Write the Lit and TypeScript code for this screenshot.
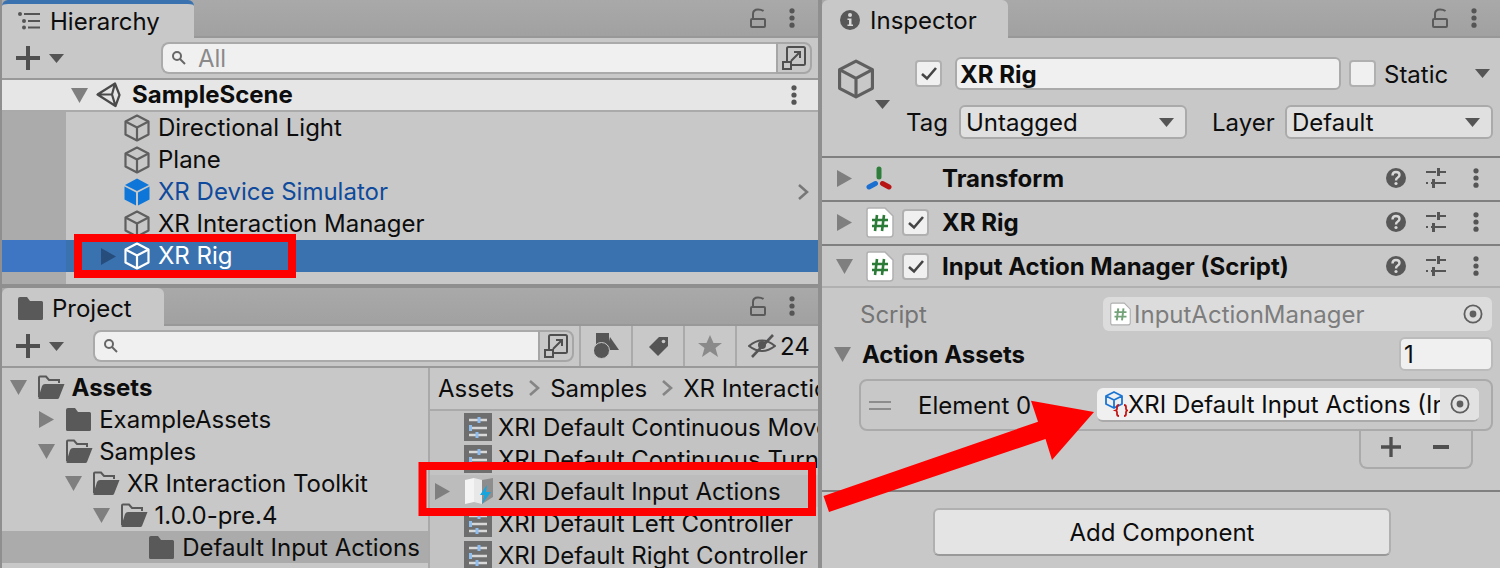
import { LitElement, html, css } from 'lit';
import { customElement } from 'lit/decorators.js';

const cube = (color = '#5f5f5f', size = 28) => html`
  <svg class="ico" width=${size} height=${size} viewBox="0 0 28 28" fill="none" stroke=${color} stroke-width="2.2" stroke-linejoin="round">
    <path d="M14 1.5 25.5 7.5V20.5L14 26.5 2.5 20.5V7.5Z" />
    <path d="M2.5 7.5 14 13.5 25.5 7.5M14 13.5V26.5" />
  </svg>`;

const blueCube = () => html`
  <svg class="ico" width="28" height="28" viewBox="0 0 28 28">
    <path d="M14 .5 26 7 14 13 2 7Z" fill="#0e76d8" />
    <path d="M1.5 8.5 13 14.5V27.5L1.5 21.5Z" fill="#0e76d8" />
    <path d="M26.5 8.5 15 14.5V27.5L26.5 21.5Z" fill="#0e76d8" />
  </svg>`;

const unity = () => html`
  <svg class="ico" width="26" height="26" viewBox="0 0 26 26" fill="none" stroke="#4a4a4a" stroke-width="2.2" stroke-linejoin="round">
    <path d="M1.5 12.5 19 1.5 23.5 13 19.5 24 1.5 12.5H16L19 1.5M16 12.5 19.5 24" />
  </svg>`;

const tri = (dir: 'down' | 'right', color = '#7f7f7f') => html`
  <svg class="ico" width="17" height="17" viewBox="0 0 17 17">
    <path d=${dir === 'down' ? 'M0 1H17L8.5 16Z' : 'M1 0V17L16 8.5Z'} fill=${color} />
  </svg>`;

const caret = () => html`
  <svg class="ico" width="15" height="9" viewBox="0 0 15 9"><path d="M0 0H15L7.5 9Z" fill="#555" /></svg>`;

const plus = (size = 24) => html`
  <svg class="ico" width=${size} height=${size} viewBox="0 0 24 24"><path d="M10 0H14V10H24V14H14V24H10V14H0V10H10Z" fill="#4f4f4f" /></svg>`;

const dots = () => html`
  <svg class="ico" width="6" height="20" viewBox="0 0 6 20" fill="#555">
    <circle cx="3" cy="2.8" r="2.6" /><circle cx="3" cy="10" r="2.6" /><circle cx="3" cy="17.2" r="2.6" />
  </svg>`;

const lock = () => html`
  <svg class="ico" width="16" height="20" viewBox="0 0 16 20" fill="none" stroke="#5a5a5a" stroke-width="2">
    <rect x="1" y="11" width="14" height="8" rx="1" />
    <path d="M3 11V6Q3 1.5 8 1.5 11.5 1.5 13.5 3" />
  </svg>`;

const expand = () => html`
  <svg class="ico" width="24" height="24" viewBox="0 0 24 24" fill="none" stroke="#4f4f4f" stroke-width="2">
    <path d="M5 15V2.5Q5 1 6.500 1H21.500Q23 1 23 2.500V18Q23 19 21.500 19H9" />
    <rect x="1" y="16" width="8" height="7" fill="#c8c8c8" />
    <path d="M9 15 18 6M12 6H18V12" />
  </svg>`;

const search = (arrow: boolean) => html`
  <svg class="ico" width="20" height="16" viewBox="0 0 20 16" fill="none" stroke="#666" stroke-width="2">
    <circle cx="6" cy="6" r="4" /><path d="M9 9 14 14" />
    ${arrow ? html`<path d="M14 4H20L17 8Z" fill="#666" stroke="none" />` : null}
  </svg>`;

const folder = () => html`
  <svg class="ico" width="25" height="25" viewBox="0 0 25 25">
    <path d="M2 1H9L12 5H23.500Q25 5 25 6.500V22.500Q25 24 23.500 24H1.500Q0 24 0 22.500V3Q0 1 2 1Z" fill="#595959" />
  </svg>`;

const folderOpen = () => html`
  <svg class="ico" width="27" height="25" viewBox="0 0 27 25">
    <path d="M1 22V2.500Q1 1.500 2 1.500H8L11 5H21V8" fill="none" stroke="#595959" stroke-width="2" />
    <path d="M7 9H26.500L21 23Q20.500 24 19.500 24H1.500Q0 24 .5 22.500L4 11Q5 9 7 9Z" fill="#595959" />
  </svg>`;

const assetIcon = () => html`
  <svg class="ico" width="28" height="28" viewBox="0 0 28 28">
    <rect width="28" height="28" fill="#6e6e6e" />
    <path d="M5 7H23M5 15H23M5 22H23" stroke="#d8d8d8" stroke-width="2.400" />
    <path d="M15 4V10" stroke="#8ebdf0" stroke-width="3" />
    <path d="M6.500 12V18" stroke="#8ebdf0" stroke-width="3" />
    <path d="M13 19V25" stroke="#8ebdf0" stroke-width="3" />
  </svg>`;

const actionsIcon = () => html`
  <svg class="ico" width="30" height="28" viewBox="0 0 30 28">
    <path d="M1 3 10 1V25L1 27Z" fill="#f4f4f4" />
    <path d="M10 1 18 3V27L10 25Z" fill="#e8e8e8" />
    <path d="M18 3 29 1V20L18 27Z" fill="#8d8d8d" />
    <path d="M23 8 16 18H20.500L18 27 27 15H22Z" fill="#16a5dc" />
  </svg>`;

const scriptIcon = (hash = '#2c7a37', w = 28, h = 31) => html`
  <svg class="ico" width=${w} height=${h} viewBox="0 0 28 31">
    <path d="M3 1H19L27 9V27Q27 30 24 30H3Q1 30 1 27V3Q1 1 3 1Z" fill="#fff" stroke="#b0b0b0" stroke-width="1.500" />
    <path d="M11 8 9 24M18 8 16 24M6 13H22M6 19H22" stroke=${hash} stroke-width="2.600" fill="none" />
  </svg>`;

const transformIcon = () => html`
  <svg class="ico" width="26" height="24" viewBox="0 0 26 24" fill="none" stroke-width="5" stroke-linecap="round">
    <path d="M13 3V11" stroke="#2f7d3a" />
    <path d="M3 21 9.500 17.500" stroke="#1b6fd0" />
    <path d="M23 21 16.500 17.500" stroke="#b81414" />
  </svg>`;

const help = () => html`
  <svg class="ico" width="20" height="20" viewBox="0 0 20 20">
    <circle cx="10" cy="10" r="10" fill="#585858" />
    <path d="M6.500 7.500Q6.500 4 10 4 13.500 4 13.500 7 13.500 8.500 11.500 9.700 10 10.500 10 12.500" fill="none" stroke="#d8d8d8" stroke-width="2.400" />
    <circle cx="10" cy="15.500" r="1.600" fill="#d8d8d8" />
  </svg>`;

const presets = () => html`
  <svg class="ico" width="20" height="20" viewBox="0 0 20 20" fill="#555">
    <path d="M0 3H10V5H0ZM14 3H20V5H14ZM11 0H14V8H11ZM0 14H2V16H0ZM5 14H20V16H5ZM6 11H9V20H6Z" />
  </svg>`;

const check = () => html`
  <span class="checkbox">
    <svg width="18" height="15" viewBox="0 0 18 15" fill="none" stroke="#444" stroke-width="2.600"><path d="M2 8 7 12.500 16 2" /></svg>
  </span>`;

const target = () => html`
  <svg class="ico" width="20" height="20" viewBox="0 0 20 20">
    <circle cx="10" cy="10" r="8.600" fill="none" stroke="#5f5f5f" stroke-width="1.800" />
    <circle cx="10" cy="10" r="3.400" fill="#5f5f5f" />
  </svg>`;

const crumbChev = () => html`
  <svg class="ico crumb-chev" width="12" height="16" viewBox="0 0 12 16" fill="none" stroke="#858585" stroke-width="2.600"><path d="M2 1 10 8 2 15" /></svg>`;

const tabMenu = () => html`<div class="tab-tools">${lock()}${dots()}</div>`;

interface TreeRow { depth: number; label: string; open?: boolean; closed?: boolean; bold?: boolean; active?: boolean; }

const TREE: TreeRow[] = [
  { depth: 0, label: 'Assets', open: true, bold: true },
  { depth: 1, label: 'ExampleAssets', closed: true },
  { depth: 1, label: 'Samples', open: true },
  { depth: 2, label: 'XR Interaction Toolkit', open: true },
  { depth: 3, label: '1.0.0-pre.4', open: true },
  { depth: 4, label: 'Default Input Actions', active: true },
];

const FILES = [
  'XRI Default Continuous Move',
  'XRI Default Continuous Turn',
  'XRI Default Input Actions',
  'XRI Default Left Controller',
  'XRI Default Right Controller',
];

@customElement('app-root')
export class AppRoot extends LitElement {
  static styles = css`
    :host {
      display: block;
      position: relative;
      width: 1500px;
      height: 568px;
      overflow: hidden;
      background: #c8c8c8;
      font-family: 'Inter', 'Liberation Sans', sans-serif;
      font-size: 24px;
      color: #0d0d0d;
    }
    * { box-sizing: border-box; }
    .ico { display: block; flex: none; }
    .page { display: flex; height: 568px; }
    .left { width: 822px; flex: none; display: flex; flex-direction: column; background: #8f8f8f; padding: 0 4px 0 2px; }
    .panel { background: #c8c8c8; display: flex; flex-direction: column; overflow: hidden; }
    .hierarchy { height: 284px; flex: none; margin-bottom: 4px; }
    .project { flex: 1; min-height: 0; }
    .right { flex: 1; display: flex; flex-direction: column; border-left: 0; }

    .strip { height: 38px; flex: none; display: flex; background: linear-gradient(#a9a9a9, #a1a1a1); border-bottom: 2px solid #989898; }
    .tab { height: 38px; display: flex; align-items: center; background: #c8c8c8; border-radius: 6px 6px 0 0; gap: 9px; padding: 2px 0 0 16px; flex: none; }
    .tab.focus { border-top: 4px solid #3a72b0; padding-top: 0; width: 192px; gap: 10px; }
    .tab-tools { margin-left: auto; display: flex; align-items: center; height: 36px; }
    .tab-tools svg:first-child { margin-right: 23px; }
    .tab-tools svg:last-child { margin-right: 23px; }

    .toolbar { height: 42px; flex: none; display: flex; align-items: center; border-bottom: 2px solid #999; padding-left: 14px; }
    .toolbar .add { display: flex; align-items: center; gap: 9px; width: 77px; flex: none; }
    .search { flex: 1; height: 32px; background: #f0f0f0; border: 2px solid #aaa; border-right: 0; border-radius: 8px 0 0 8px; display: flex; align-items: center; padding-left: 8px; gap: 7px; color: #8a8a8a; min-width: 0; }
    .expand { width: 36px; height: 32px; flex: none; border: 2px solid #a6a6a6; border-radius: 0 8px 8px 0; display: flex; align-items: center; justify-content: center; }
    .hierarchy .expand { margin-right: 6px; }

    .scene { height: 32px; flex: none; background: #e6e6e6; border-bottom: 2px solid #aaa; display: flex; align-items: center; font-weight: 700; padding-left: 69px; }
    .scene .tri-box { width: 25px; }
    .scene .name { margin-left: 10px; padding-bottom: 1px; }
    .scene .more { margin-left: auto; margin-right: 21px; }

    .hrow { height: 32px; flex: none; display: flex; align-items: center; white-space: nowrap; }
    .gutter { width: 64px; height: 100%; flex: none; background: #ababab; margin-right: 30px; }
    .hrow .tri-slot { width: 27px; flex: none; padding-left: 4px; }
    .hrow .label { margin-left: 7px; padding-bottom: 1px; }
    .hrow.prefab { color: #0f4a9c; }
    .hrow.selected { background: #3a72b0; color: #fff; }
    .hrow.selected .gutter { background: #3e76c3; }
    .hrow .chev { margin-left: auto; margin-right: 9px; }
    .hfill { flex: 1; display: flex; }
    .hfill .gutter { height: auto; }

    .proj-tools { display: flex; height: 40px; flex: none; margin-left: 5px; }
    .proj-tool { width: 52px; border-left: 2px solid #aaa; display: flex; align-items: center; justify-content: center; }
    .proj-tool.count { width: 83px; gap: 4px; justify-content: flex-start; padding-left: 11px; }

    .columns { flex: 1; display: flex; min-height: 0; }
    .tree { width: 426px; flex: none; border-right: 0; padding-top: 3px; overflow: hidden; }
    .tree-row { height: 32px; display: flex; align-items: center; white-space: nowrap; }
    .tree-row.active { background: #ababab; }
    .tree-row.strong { font-weight: 700; }
    .tri-col { width: 28px; flex: none; }
    .icon-col { width: 33.500px; flex: none; }
    .files { flex: 1; min-width: 0; border-left: 2px solid #a9a9a9; display: flex; flex-direction: column; overflow: hidden; background: #c3c3c3; }
    .crumbs { height: 43px; flex: none; display: flex; align-items: center; background: #c8c8c8; border-bottom: 2px solid #aaa; padding: 0 0 1px 8px; gap: 13px; white-space: nowrap; }
    .crumb-chev { margin: 0 -3px 0 1px; }
    .file { height: 32px; flex: none; display: flex; align-items: center; padding-left: 34px; white-space: nowrap; }
    .file .tri { width: 0; flex: none; position: relative; left: -30px; }
    .file.picked { background: #bcbcbc; }

    .head { height: 120px; flex: none; display: flex; border-bottom: 2px solid #808080; padding-top: 19px; }
    .cube-col { width: 85px; flex: none; padding: 2px 0 0 14px; position: relative; }
    .cube-col .caret { position: absolute; left: 53px; top: 43px; }
    .head-main { flex: 1; min-width: 0; padding-right: 7px; display: flex; flex-direction: column; gap: 15px; }
    .head-row { display: flex; align-items: center; }
    .name-row { margin-left: 8px; height: 33px; }
    .checkbox { width: 27px; height: 27px; flex: none; background: #f0f0f0; border: 2px solid #b0b0b0; border-radius: 4px; display: flex; align-items: center; justify-content: center; }
    .name-field { width: 386px; height: 33px; margin: 0 8px 0 13px; background: #f0f0f0; border: 2px solid #aaa; border-radius: 6px; font-weight: 700; display: flex; align-items: center; padding: 1px 0 0 3px; }
    .static { margin-left: 8px; padding-top: 1px; }
    .head-row .end { margin-left: auto; margin-right: 3px; }
    .tag-label { width: 53px; flex: none; margin-left: -1px; }
    .layer-label { width: 73px; flex: none; margin-left: 25px; }
    .drop { height: 34px; background: #e0e0e0; border: 2px solid #aaa; border-radius: 6px; display: flex; align-items: center; padding: 0 11px 0 5px; justify-content: space-between; }
    .drop.a { width: 228px; }
    .drop.b { width: 208px; }

    .comp { height: 44px; flex: none; display: flex; align-items: center; border-bottom: 2px solid #808080; padding: 0 0 2px 14px; font-weight: 700; white-space: nowrap; }
    .comp.last { height: 42px; border-bottom-color: #b0b0b0; padding-bottom: 0; }
    .comp .t { width: 30px; flex: none; }
    .comp .i { width: 36px; flex: none; }
    .comp .i.wide { width: 76px; }
    .comp .c { width: 40px; flex: none; }
    .comp .tools { margin-left: auto; display: flex; align-items: center; gap: 20px; padding-right: 21px; }
    .comp .tools svg:last-child { margin-left: 7px; }

    .body { flex: 1; display: flex; flex-direction: column; padding-top: 9px; min-height: 0; }
    .prop { display: flex; align-items: center; height: 34px; flex: none; }
    .prop.script { color: #757575; padding-left: 38px; }
    .script-field { margin-left: auto; margin-right: 8px; width: 389px; height: 34px; background: #dcdcdc; border-radius: 6px; display: flex; align-items: center; padding-left: 7px; gap: 3px; color: #7d7d7d; }
    .script-field .t2 { margin-left: auto; margin-right: 9px; }
    .prop.array { margin-top: 6px; padding-left: 12px; font-weight: 700; }
    .prop.array .label { margin-left: 11px; padding-top: 1px; }
    .count-box { margin-left: auto; margin-right: 7px; width: 94px; height: 34px; background: #f0f0f0; border: 2px solid #bbb; border-radius: 6px; font-weight: 400; padding-left: 3px; display: flex; align-items: center; }
    .element { margin: 8px 7px 0 37px; height: 52px; flex: none; border: 2px solid #aaa; border-radius: 8px; display: flex; align-items: center; padding-left: 8px; }
    .grip { width: 22px; height: 9px; border-top: 2px solid #8c8c8c; border-bottom: 2px solid #8c8c8c; flex: none; margin-right: 27px; }
    .obj { margin-left: auto; margin-right: 12px; width: 382px; height: 34px; background: #f0f0f0; border-radius: 6px; border-bottom: 2px solid #aaa; display: flex; align-items: center; padding-left: 7px; overflow: hidden; }
    .obj .txt { width: 312px; flex: none; white-space: nowrap; overflow: hidden; padding-top: 1px; }
    .obj .tgt { flex: 1; align-self: stretch; background: #e2e2e2; display: flex; align-items: center; justify-content: center; }
    .footer { margin: -2px 27px 0 auto; width: 114px; height: 40px; flex: none; border: 2px solid #aaa; border-top: 0; border-radius: 0 0 8px 8px; display: flex; align-items: center; padding: 0 0 2px 20px; gap: 32px; }
    .minus { width: 16px; height: 4px; background: #4f4f4f; }
    .sep { height: 2px; flex: none; margin-top: 21px; background: #808080; }
    .add-comp { margin: 16px 0 0 111px; width: 458px; height: 48px; flex: none; background: #e4e4e4; border: 2px solid #b0b0b0; border-bottom-color: #999; border-radius: 6px; display: flex; align-items: center; justify-content: center; }

    .marks { position: absolute; left: 0; top: 0; pointer-events: none; }
  `;

  private renderHierarchy() {
    const row = (label: string, extra = '', icon = cube(), slot: unknown = null, tail: unknown = null) => html`
      <div class="hrow ${extra}">
        <span class="gutter"></span>
        <span class="tri-slot">${slot}</span>
        ${icon}
        <span class="label">${label}</span>
        ${tail}
      </div>`;
    return html`
      <section class="panel hierarchy">
        <div class="strip">
          <div class="tab focus">
            <svg class="ico" width="22" height="18" viewBox="0 0 22 18" fill="#555">
              <circle cx="2" cy="2" r="2" /><rect x="6" y="1" width="16" height="2" />
              <circle cx="6" cy="9" r="2" /><rect x="10" y="8" width="12" height="2" />
              <circle cx="6" cy="15.500" r="2" /><rect x="10" y="14.500" width="12" height="2" />
            </svg>
            Hierarchy
          </div>
          ${tabMenu()}
        </div>
        <div class="toolbar">
          <div class="add" style="width:145px">${plus()}${caret()}</div>
          <div class="search">${search(true)}<span>All</span></div>
          <div class="expand">${expand()}</div>
        </div>
        <div class="scene">
          <span class="tri-box">${tri('down')}</span>
          ${unity()}
          <span class="name">SampleScene</span>
          <span class="more">${dots()}</span>
        </div>
        ${row('Directional Light')}
        ${row('Plane')}
        ${row('XR Device Simulator', 'prefab', blueCube(), null, html`
          <svg class="ico chev" width="12" height="18" viewBox="0 0 12 18" fill="none" stroke="#777" stroke-width="2.500"><path d="M2 2 10 9 2 16" /></svg>`)}
        ${row('XR Interaction Manager')}
        ${row('XR Rig', 'selected', cube('#fff'), tri('right', '#264d7c'))}
        <div class="hfill"><span class="gutter"></span></div>
      </section>`;
  }

  private renderProject() {
    return html`
      <section class="panel project">
        <div class="strip">
          <div class="tab" style="width:162px">${folder()} Project</div>
          ${tabMenu()}
        </div>
        <div class="toolbar">
          <div class="add">${plus()}${caret()}</div>
          <div class="search">${search(false)}</div>
          <div class="expand">${expand()}</div>
          <div class="proj-tools">
            <div class="proj-tool">
              <svg class="ico" width="25" height="26" viewBox="0 0 25 26" fill="#555">
                <path d="M16 4 25 17H13Z" />
                <rect x="2" y="0" width="13" height="12" />
                <circle cx="7.500" cy="17.500" r="8" stroke="#c8c8c8" stroke-width="1" />
              </svg>
            </div>
            <div class="proj-tool">
              <svg class="ico" width="21" height="21" viewBox="0 0 21 21"><path d="M11 1H20V10L10 20 1 11Z" fill="#555" /><circle cx="15.500" cy="5.500" r="1.800" fill="#c8c8c8" /></svg>
            </div>
            <div class="proj-tool">
              <svg class="ico" width="24" height="22" viewBox="0 0 24 22"><path d="M12 0 15.500 8H24L17.500 13 20 22 12 16.500 4 22 6.500 13 0 8H8.500Z" fill="#8a8a8a" /></svg>
            </div>
            <div class="proj-tool count">
              <svg class="ico" width="28" height="24" viewBox="0 0 28 24" fill="none" stroke="#555" stroke-width="2">
                <path d="M1 12Q14 1 27 12 14 22 1 12Z" /><circle cx="14" cy="11" r="4" fill="#555" stroke="none" /><path d="M4 23 25 1" stroke-width="2.600" />
              </svg>
              <span>24</span>
            </div>
          </div>
        </div>
        <div class="columns">
          <div class="tree">
            ${TREE.map((r) => html`
              <div class="tree-row ${r.active ? 'active' : ''} ${r.bold ? 'strong' : ''}" style="padding-left:${8 + r.depth * 27.7}px">
                <span class="tri-col">${r.open ? tri('down') : r.closed ? tri('right') : null}</span>
                <span class="icon-col">${r.open ? folderOpen() : folder()}</span>
                <span>${r.label}</span>
              </div>`)}
          </div>
          <div class="files">
            <div class="crumbs">
              <span>Assets</span>
              ${crumbChev()}
              <span>Samples</span>
              ${crumbChev()}
              <span>XR Interaction Toolkit</span>
            </div>
            ${FILES.map((f, i) => html`
              <div class="file ${i === 2 ? 'picked' : ''}">
                ${i === 2 ? html`<span class="tri">${tri('right')}</span>` : null}
                ${i === 2 ? actionsIcon() : assetIcon()}
                <span style="margin-left:${i === 2 ? 4 : 6}px">${f}</span>
              </div>`)}
          </div>
        </div>
      </section>`;
  }

  private renderInspector() {
    const tools = html`<div class="tools">${help()}${presets()}${dots()}</div>`;
    return html`
      <section class="panel right">
        <div class="strip">
          <div class="tab" style="width:186px;padding-left:18px;gap:10px">
            <svg class="ico" width="20" height="20" viewBox="0 0 20 20">
              <circle cx="10" cy="10" r="10" fill="#585858" />
              <circle cx="10" cy="5" r="2" fill="#d8d8d8" /><path d="M7.500 8.500H11.500V14.500H13V16H7.500V14.500H9V10H7.500Z" fill="#d8d8d8" />
            </svg>
            Inspector
          </div>
          ${tabMenu()}
        </div>
        <div class="head">
          <div class="cube-col">
            ${cube('#5f5f5f', 40)}
            <span class="caret">${caret()}</span>
          </div>
          <div class="head-main">
            <div class="head-row name-row">
              ${check()}
              <div class="name-field">XR Rig</div>
              <span class="checkbox"></span>
              <span class="static">Static</span>
              <span class="end">${caret()}</span>
            </div>
            <div class="head-row">
              <span class="tag-label">Tag</span>
              <div class="drop a"><span>Untagged</span>${caret()}</div>
              <span class="layer-label">Layer</span>
              <div class="drop b"><span>Default</span>${caret()}</div>
            </div>
          </div>
        </div>
        <div class="comp">
          <span class="t">${tri('right')}</span>
          <span class="i wide">${transformIcon()}</span>
          Transform
          ${tools}
        </div>
        <div class="comp">
          <span class="t">${tri('right')}</span>
          <span class="i">${scriptIcon()}</span>
          <span class="c">${check()}</span>
          XR Rig
          ${tools}
        </div>
        <div class="comp last">
          <span class="t">${tri('down')}</span>
          <span class="i">${scriptIcon()}</span>
          <span class="c">${check()}</span>
          Input Action Manager (Script)
          ${tools}
        </div>
        <div class="body">
          <div class="prop script">
            <span>Script</span>
            <div class="script-field">
              ${scriptIcon('#74a37a', 21, 24)}
              <span>InputActionManager</span>
              <span class="t2">${target()}</span>
            </div>
          </div>
          <div class="prop array">
            ${tri('down')}
            <span class="label">Action Assets</span>
            <div class="count-box">1</div>
          </div>
          <div class="element">
            <span class="grip"></span>
            <span>Element 0</span>
            <div class="obj">
              <svg class="ico" width="24" height="28" viewBox="0 0 24 28" fill="none">
                <path d="M10 2 18 6V14L10 18 2 14V6ZM2 6 10 10 18 6M10 10V18" stroke="#1b74d2" stroke-width="1.800" stroke-linejoin="round" />
                <path d="M15 15Q13 15 13 17V19Q13 20 11.500 20.500 13 21 13 22V24Q13 26 15 26M20 15Q22 15 22 17V19Q22 20 23.500 20.500 22 21 22 22V24Q22 26 20 26" stroke="#c41616" stroke-width="1.800" />
              </svg>
              <span class="txt">XRI Default Input Actions (Input Action Asset)</span>
              <span class="tgt">${target()}</span>
            </div>
          </div>
          <div class="footer">
            ${plus(20)}
            <span class="minus"></span>
          </div>
          <div class="sep"></div>
          <div class="add-comp">Add Component</div>
        </div>
      </section>`;
  }

  render() {
    return html`
      <div class="page">
        <div class="left">${this.renderHierarchy()}${this.renderProject()}</div>
        <div class="right">${this.renderInspector()}</div>
      </div>
      <svg class="marks" width="1500" height="568" viewBox="0 0 1500 568">
        <rect x="78" y="238" width="214" height="36" fill="none" stroke="#f00" stroke-width="8" />
        <rect x="422.500" y="466" width="389.500" height="46" fill="none" stroke="#f00" stroke-width="8" />
        <path d="M823.500 496 1038 421.700 1031 400.700 1094 412 1052 460 1045.500 439 829 512Z" fill="#f00" />
      </svg>`;
  }
}
